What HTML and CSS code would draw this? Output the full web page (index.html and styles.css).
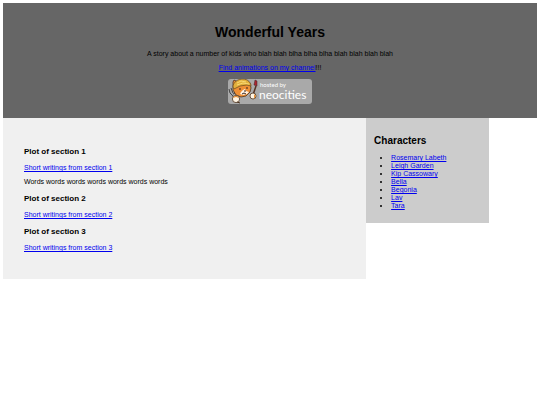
FILE: index.html
```html
<!DOCTYPE html>
<html lang="en">
<head>
  <meta charset="UTF-8">
  <title>Wonderful Years</title>
  <meta name="viewport" content="width=device-width, initial-scale=1.0">
  <link rel="stylesheet" href="styles.css">
</head>
<body>
  <header class="header">
    <h1>Wonderful Years</h1>
    <p>A story about a number of kids who blah blah blha blha blha blah blah blah blah</p>
    <p><a href="#channel">Find animations on my channel</a>!!!</p>
    <a class="badge" href="#neocities" aria-label="Hosted by Neocities">
      <svg viewBox="0 0 84 25" width="84" height="25">
        <rect width="84" height="25" rx="3" fill="#a9a9a9"/>
        <!-- fork -->
        <path d="M1 10l1 4 2 2 4 5M3 9l2 5M7 9v5l-2 1" fill="none" stroke="#444" stroke-width="1"/>
        <!-- brush -->
        <path d="M28 7l-3 9" stroke="#54301f" stroke-width="1.5"/>
        <path d="M26 6l1-5 2 1v5z" fill="#a92530" stroke="#42252a" stroke-width=".5"/>
        <!-- cat -->
        <path d="M5 3l1-2 4 2 7-1 5 2 1 5-1 4-4 4-5 1-5-2-3-5z" fill="#ee8f35" stroke="#4d3420" stroke-width=".8"/>
        <path d="M15 11l2-1 1 2 3 1-2 2-4 1-3-1 1-2z" fill="#fff4e5"/>
        <path d="M5 8c0-5 5-8 10-8 5 0 8 4 8 7l-4-1-7 1-6 3z" fill="#e3b03c" stroke="#76511e" stroke-width=".8"/>
        <path d="M9 4l4-2 5 1M9 6l6-2 6 1" fill="none" stroke="#f7d873" stroke-width="1"/>
        <path d="M12 9v2M19 8v2M16 12h2M14 15l2-1 2 1" fill="none" stroke="#39251b" stroke-width="1"/>
        <circle cx="8" cy="20" r="3.6" fill="#fff4e2" stroke="#4d3420" stroke-width=".8"/>
        <path d="M5 19c1-3 5-3 6 0l-3-1z" fill="#e68f37"/>
        <path d="M9 23l3 1" stroke="#4d3420" stroke-width="1"/>
        <circle cx="25" cy="17" r="3" fill="#fff4e2" stroke="#4d3420" stroke-width=".8"/>
        <path d="M26 15l2 2-2 3z" fill="#e68f37"/>
        <text class="badge-small" x="32" y="8">hosted by</text>
        <text class="badge-name" x="31" y="20">neocities</text>
      </svg>
    </a>
  </header>

  <div class="row">
    <main class="main">
      <h3>Plot of section 1</h3>
      <p><a href="#section1">Short writings from section 1</a></p>
      <p>Words words words words words words words</p>
      <h3>Plot of section 2</h3>
      <p><a href="#section2">Short writings from section 2</a></p>
      <h3>Plot of section 3</h3>
      <p><a href="#section3">Short writings from section 3</a></p>
    </main>

    <aside class="side">
      <h2>Characters</h2>
      <ul>
        <li><a href="#rosemary">Rosemary Labeth</a></li>
        <li><a href="#leigh">Leigh Garden</a></li>
        <li><a href="#kip">Kip Cassowary</a></li>
        <li><a href="#bella">Bella</a></li>
        <li><a href="#begonia">Begonia</a></li>
        <li><a href="#lav">Lav</a></li>
        <li><a href="#tara">Tara</a></li>
      </ul>
    </aside>
  </div>
</body>
</html>
```
FILE: styles.css
```css
* {
  box-sizing: border-box;
}
body {
  margin: 3px;
  background: #fff;
  color: #000;
  font-family: Arial, "Liberation Sans", sans-serif;
  font-size: 7px;
  line-height: 8px;
}
h1, h2, h3, p {
  margin: 0;
}
p {
  margin-bottom: 6px;
}
a {
  color: #0000ee;
}
.header {
  background: #666;
  text-align: center;
  padding: 21px 12px 14px;
}
h1 {
  font-size: 14px;
  line-height: 16px;
  margin-bottom: 10px;
}
.badge {
  display: block;
  padding-top: 1px;
}
.badge svg {
  display: block;
  margin: 0 auto;
}
.badge-small, .badge-name {
  font-family: Lato, "Open Sans", sans-serif;
  fill: #fff;
}
.badge-small {
  font-size: 6px;
}
.badge-name {
  font-size: 12px;
}
.row {
  display: flex;
  align-items: flex-start;
}
.main {
  width: 68%;
  background: #f0f0f0;
  padding: 29px 21px 21px;
}
h3 {
  font-size: 8px;
  line-height: 10px;
  margin-bottom: 7px;
}
.main p + h3 {
  margin-top: 8px;
}
.side {
  width: 23%;
  background: #ccc;
  padding: 17px 8px 13px;
}
h2 {
  font-size: 10px;
  line-height: 12px;
  margin-bottom: 7px;
}
ul {
  margin: 0;
  padding-left: 17px;
}
```
